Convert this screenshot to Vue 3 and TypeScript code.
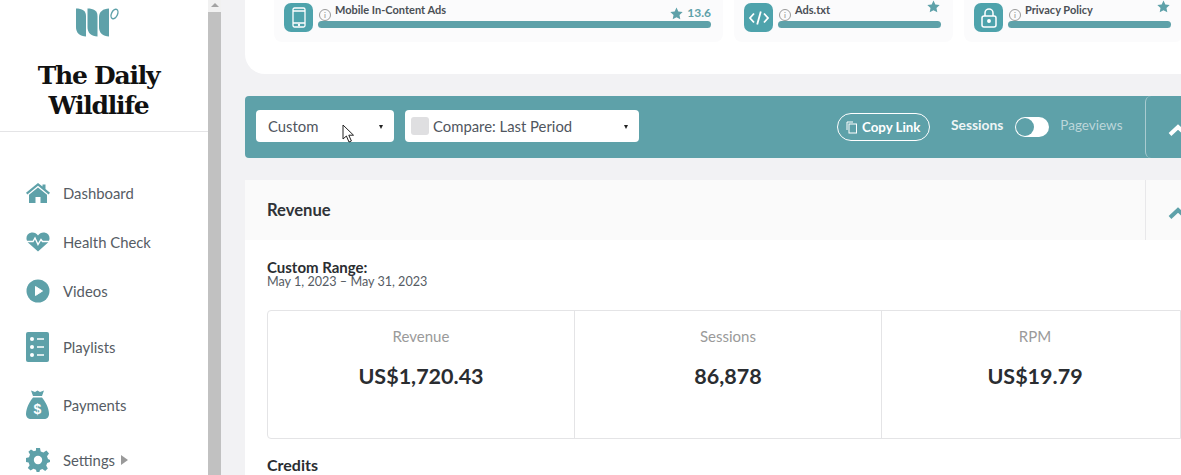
<script setup lang="ts">
const navItems = [
  { label: 'Dashboard', icon: 'home', h: 49, arrow: false },
  { label: 'Health Check', icon: 'heart', h: 49, arrow: false },
  { label: 'Videos', icon: 'play', h: 50, arrow: false },
  { label: 'Playlists', icon: 'list', h: 61, arrow: false },
  { label: 'Payments', icon: 'bag', h: 55, arrow: false },
  { label: 'Settings', icon: 'gear', h: 55, arrow: true }
]

const adCards = [
  { label: 'Mobile In-Content Ads', icon: 'phone', score: '13.6', width: 449 },
  { label: 'Ads.txt', icon: 'code', score: '', width: 219 },
  { label: 'Privacy Policy', icon: 'lock', score: '', width: 219 }
]

const stats = [
  { label: 'Revenue', value: 'US$1,720.43' },
  { label: 'Sessions', value: '86,878' },
  { label: 'RPM', value: 'US$19.79' }
]
</script>

<template>
  <div class="page">
    <aside class="sidebar">
      <div class="brand">
        <svg class="logo" width="44" height="29" viewBox="0 0 44 29">
          <path d="M0 0.5 C6 0.5 10 2.5 10 8 V28.5 C4 28.5 0 25 0 19 Z" fill="#5ea1a9" />
          <path d="M11.5 0.5 C17.5 0.5 21.5 2.5 21.5 8 V28.5 C15.5 28.5 11.5 25 11.5 19 Z" fill="#5ea1a9" />
          <path d="M33 0.5 V28.5 C27 28.5 23 25 23 19 V9 C23 4 27 0.5 33 0.5 Z" fill="#5ea1a9" />
          <ellipse cx="38.5" cy="6" rx="3" ry="5" transform="rotate(25 38.5 6)" fill="none" stroke="#5ea1a9" stroke-width="1.4" />
        </svg>
        <h1 class="brand-name">The Daily<br />Wildlife</h1>
      </div>
      <nav class="nav">
        <a v-for="item in navItems" :key="item.label" class="nav-item" :style="{ height: item.h + 'px' }">
          <span class="nav-icon">
            <svg v-if="item.icon === 'home'" width="24" height="20" viewBox="0 0 24 20">
              <path d="M12 0 L16.5 3.6 V1.5 H19.5 V6 L24 9.8 L22.6 11.4 L12 2.8 L1.4 11.4 L0 9.8 Z" fill="#5ea1a9" />
              <path d="M12 4.6 L21 11.8 V20 H14.5 V14 H9.5 V20 H3 V11.8 Z" fill="#5ea1a9" />
            </svg>
            <svg v-else-if="item.icon === 'heart'" width="24" height="20" viewBox="0 0 24 20">
              <path d="M12 19.5 L2.5 11 C-1 7.5 0 1.5 5.5 0.6 C8.2 0.2 10.5 1.4 12 3.4 C13.5 1.4 15.8 0.2 18.5 0.6 C24 1.5 25 7.5 21.5 11 Z" fill="#5ea1a9" />
              <path d="M0 9.5 H7 L9 6 L12 12.5 L15 7.5 L16.5 9.5 H24" fill="none" stroke="#fff" stroke-width="1.4" />
            </svg>
            <svg v-else-if="item.icon === 'play'" width="24" height="24" viewBox="0 0 24 24">
              <circle cx="12" cy="12" r="11.5" fill="#5ea1a9" />
              <path d="M9.5 7.5 L16.5 12 L9.5 16.5 Z" fill="#fff" stroke="#fff" stroke-linejoin="round" />
            </svg>
            <svg v-else-if="item.icon === 'list'" width="23" height="30" viewBox="0 0 23 30">
              <rect width="23" height="30" rx="2" fill="#5ea1a9" />
              <circle cx="6" cy="7" r="2" fill="#fff" />
              <circle cx="6" cy="15" r="2" fill="#fff" />
              <circle cx="6" cy="23" r="2" fill="#fff" />
              <path d="M11 7 H18 M11 15 H18 M11 23 H18" stroke="#fff" stroke-width="1.6" />
            </svg>
            <svg v-else-if="item.icon === 'bag'" width="23" height="29" viewBox="0 0 23 29">
              <path d="M5 0.5 L9 2 L11.5 0.5 L14 2 L18 0.5 L16 6 H7 Z" fill="#5ea1a9" />
              <path d="M7 7.5 H16 C19 11 23 18 23 24 C23 27 21 29 18 29 H5 C2 29 0 27 0 24 C0 18 4 11 7 7.5 Z" fill="#5ea1a9" />
              <text x="11.5" y="24" text-anchor="middle" class="bag-sign">$</text>
            </svg>
            <svg v-else width="24" height="24" viewBox="0 0 24 24">
              <path d="M10 0 H14 L14.7 3.4 L17.4 4.5 L20.4 2.6 L23 5.4 L21 8.2 L22 11 L24 12 V14 L21.2 15 L20.2 17.6 L21.8 20.4 L19.2 23 L16.4 21 L14 22 L13.4 24 H10.6 L10 21.8 L7.4 20.8 L4.6 22.6 L1.8 20 L3.6 17.2 L2.6 14.6 L0 14 V10 L3 9.2 L4 6.6 L2.4 3.8 L5 1.4 L7.8 3.2 L10 2.4 Z" fill="#5ea1a9" />
              <circle cx="12" cy="12" r="4.2" fill="#fff" />
            </svg>
          </span>
          <span class="nav-label">{{ item.label }}</span>
          <span v-if="item.arrow" class="nav-arrow" />
        </a>
      </nav>
    </aside>

    <div class="scrollbar">
      <span class="scroll-up" />
      <span class="scroll-thumb" />
    </div>

    <main class="content">
      <section class="top-card">
        <div
          v-for="card in adCards"
          :key="card.label"
          class="ad-card"
          :style="{ width: card.width + 'px' }"
        >
          <span class="ad-icon">
            <svg v-if="card.icon === 'phone'" width="14" height="21" viewBox="0 0 14 21" fill="none" stroke="#fff" stroke-width="1.3">
              <rect x="1" y="1" width="12" height="19" rx="1.5" />
              <path d="M1 4 H13 M1 16 H13" />
              <circle cx="7" cy="18" r="0.5" fill="#fff" />
            </svg>
            <svg v-else-if="card.icon === 'code'" width="20" height="14" viewBox="0 0 20 14" fill="none" stroke="#fff" stroke-width="1.8">
              <path d="M5 2.5 L1 7 L5 11.5 M15 2.5 L19 7 L15 11.5 M11.8 0.5 L8.2 13.5" />
            </svg>
            <svg v-else width="16" height="20" viewBox="0 0 16 20" fill="none" stroke="#fff" stroke-width="1.5">
              <rect x="1" y="8" width="14" height="11" rx="2" />
              <path d="M4 8 V5 C4 2.5 6 1 8 1 C10 1 12 2.5 12 5 V8" />
              <circle cx="8" cy="13" r="1.2" fill="#fff" />
            </svg>
          </span>
          <div class="ad-body">
            <div class="ad-head">
              <span class="info">i</span>
              <span class="ad-title">{{ card.label }}</span>
              <span class="ad-score" :class="{ 'ad-score-empty': !card.score }">
                <svg width="13" height="13" viewBox="0 0 24 24"><path d="M12 1 L15.4 8.2 L23.4 9.2 L17.5 14.7 L19 22.6 L12 18.7 L5 22.6 L6.5 14.7 L0.6 9.2 L8.6 8.2 Z" fill="#5ea1a9" /></svg>
                {{ card.score }}
              </span>
            </div>
            <div class="ad-bar" />
          </div>
        </div>
      </section>

      <section class="toolbar">
        <div class="select select-range">
          <span>Custom</span>
          <i class="caret" />
          <svg class="cursor" width="14" height="20" viewBox="0 0 14 20">
            <path d="M1 1 V15 L4.4 12 L7 18 L9.4 17 L6.8 11.2 H11.5 Z" fill="#fff" stroke="#222" stroke-width="1" />
          </svg>
        </div>
        <div class="select select-compare">
          <span class="swatch" />
          <span>Compare: Last Period</span>
          <i class="caret" />
        </div>
        <button type="button" class="copy-link">
          <svg width="12" height="13" viewBox="0 0 12 13" fill="none" stroke="#fff" stroke-width="1">
            <rect x="3" y="3" width="7.5" height="9" />
            <path d="M1 9 V1 H7" />
          </svg>
          Copy Link
        </button>
        <span class="toggle-label">Sessions</span>
        <span class="toggle"><span class="knob" /></span>
        <span class="toggle-label toggle-off">Pageviews</span>
        <span class="collapse collapse-light">
          <svg width="20" height="14" viewBox="0 0 20 14"><path d="M2 11.5 L10 4 L18 11.5" fill="none" stroke="#fff" stroke-width="4" /></svg>
        </span>
      </section>

      <section class="revenue">
        <header class="revenue-head">
          <h2>Revenue</h2>
          <span class="collapse">
            <svg width="20" height="14" viewBox="0 0 20 14"><path d="M2 11.5 L10 4 L18 11.5" fill="none" stroke="#5ea1a9" stroke-width="4" /></svg>
          </span>
        </header>
        <div class="revenue-body">
          <div class="range-title">Custom Range:</div>
          <div class="range-dates">May 1, 2023 – May 31, 2023</div>
          <div class="stats">
            <div v-for="stat in stats" :key="stat.label" class="stat">
              <div class="stat-label">{{ stat.label }}</div>
              <div class="stat-value">{{ stat.value }}</div>
            </div>
          </div>
          <h3 class="credits">Credits</h3>
        </div>
      </section>
    </main>
  </div>
</template>

<style>
html,
body {
  margin: 0;
  overflow: hidden;
  background: #f2f2f4;
}
</style>

<style scoped>
.page {
  display: flex;
  width: 1181px;
  height: 475px;
  overflow: hidden;
  font-family: "Lato", "Open Sans", "Liberation Sans", sans-serif;
  color: #4a4f55;
}

.sidebar {
  flex: 0 0 208px;
  background: #fff;
}

.brand {
  height: 132px;
  box-sizing: border-box;
  border-bottom: 1px solid #e4e4e6;
  padding: 8px 11px 0 0;
  text-align: center;
}

.logo {
  display: block;
  margin-left: 76px;
}

.brand-name {
  margin: 24px 0 0;
  font-family: "DejaVu Serif", "Liberation Serif", serif;
  font-size: 25px;
  line-height: 30px;
  font-weight: 700;
  color: #111;
  letter-spacing: -1.25px;
}

.nav {
  display: flex;
  flex-direction: column;
  padding-top: 36px;
}

.nav-item {
  display: flex;
  align-items: center;
  padding-left: 26px;
}

.nav-icon {
  display: flex;
  flex: 0 0 37px;
}

.nav-label {
  font-size: 14.85px;
  color: #565c64;
}

.nav-arrow {
  margin-left: 6px;
  border-left: 7px solid #9a9a9a;
  border-top: 5px solid transparent;
  border-bottom: 5px solid transparent;
}

.bag-sign {
  font-size: 14px;
  font-weight: 700;
  fill: #fff;
  font-family: "Liberation Sans", sans-serif;
}

.scrollbar {
  flex: 0 0 13px;
  background: #f1f1f1;
  display: flex;
  flex-direction: column;
  align-items: center;
}

.scroll-up {
  margin-top: 3px;
  height: 0;
  border-left: 4px solid transparent;
  border-right: 4px solid transparent;
  border-bottom: 4px solid #a3a3a3;
}

.scroll-thumb {
  width: 100%;
  flex: 1;
  margin-top: 5px;
  background: #c1c1c1;
}

.content {
  flex: 1;
  min-width: 0;
  padding: 0 0 0 24px;
  background: #f2f2f4;
}

.top-card {
  display: flex;
  gap: 11px;
  height: 74px;
  box-sizing: border-box;
  margin-right: -40px;
  padding-left: 29px;
  background: #fff;
  border-radius: 0 0 0 20px;
}

.ad-card {
  display: flex;
  gap: 5px;
  flex: none;
  height: 42px;
  box-sizing: border-box;
  padding: 3px 12px 0 10px;
  background: #fbfbfc;
  border-radius: 0 0 8px 8px;
}

.ad-icon {
  flex: 0 0 29px;
  height: 29px;
  display: flex;
  align-items: center;
  justify-content: center;
  background: #4ea3ac;
  border-radius: 7px;
}

.ad-body {
  flex: 1;
  min-width: 0;
}

.ad-head {
  display: flex;
  align-items: flex-start;
  height: 18px;
}

.info {
  width: 10px;
  height: 10px;
  margin: 6px 4px 0 1px;
  border: 1px solid #9a9a9a;
  border-radius: 50%;
  font-size: 8px;
  line-height: 10px;
  text-align: center;
  color: #8a8a8a;
}

.ad-title {
  font-size: 11px;
  line-height: 14px;
  font-weight: 700;
  color: #4a4f55;
}

.ad-score {
  display: flex;
  align-items: center;
  gap: 4px;
  margin-left: auto;
  margin-top: 3px;
  font-size: 12px;
  line-height: 14px;
  font-weight: 700;
  color: #5ea1a9;
}

.ad-score-empty {
  margin-top: -3px;
  margin-right: 1px;
}

.ad-bar {
  height: 7px;
  border-radius: 4px;
  background: #5ea1a9;
}

.toolbar {
  display: flex;
  align-items: center;
  height: 62px;
  margin-top: 22px;
  padding-left: 11px;
  background: #5ea1a9;
  border-radius: 4px 0 0 4px;
}

.select {
  position: relative;
  display: flex;
  align-items: center;
  height: 32px;
  margin-bottom: 2px;
  box-sizing: border-box;
  background: #fff;
  border-radius: 4px;
  font-size: 14.85px;
  color: #505660;
}

.select-range {
  width: 138px;
  padding-left: 12px;
}

.select-compare {
  width: 234px;
  margin-left: 11px;
  padding-left: 6px;
  gap: 4px;
}

.swatch {
  width: 18px;
  height: 18px;
  border-radius: 3px;
  background: #dfdfe1;
}

.caret {
  position: absolute;
  right: 11px;
  top: 15px;
  border-left: 2.5px solid transparent;
  border-right: 2.5px solid transparent;
  border-top: 4px solid #222;
}

.cursor {
  position: absolute;
  left: 86px;
  top: 14px;
}

.copy-link {
  display: flex;
  align-items: center;
  gap: 4px;
  width: 93px;
  height: 28px;
  margin-left: 198px;
  padding: 0 0 0 8px;
  background: transparent;
  border: 1px solid #fff;
  border-radius: 14px;
  font-family: inherit;
  font-size: 13.3px;
  font-weight: 700;
  color: #fff;
  white-space: nowrap;
}

.toggle-label {
  margin-left: 21px;
  margin-top: -5px;
  font-size: 13.8px;
  font-weight: 700;
  color: #eef5f6;
}

.toggle-off {
  margin-left: 11px;
  font-size: 13.5px;
  font-weight: 400;
  color: #bcd6da;
}

.toggle {
  display: block;
  width: 34px;
  height: 20px;
  margin-left: 12px;
  background: #fff;
  border-radius: 10px;
  position: relative;
}

.knob {
  position: absolute;
  left: 1px;
  top: 1px;
  width: 18px;
  height: 18px;
  border-radius: 50%;
  background: #5ea1a9;
}

.collapse {
  display: flex;
  align-items: center;
  justify-content: flex-start;
  width: 36px;
  height: 100%;
  margin-left: auto;
  box-sizing: border-box;
  padding: 6px 0 0 22px;
  border-left: 1px solid #e8e8ea;
  flex: none;
}

.collapse svg {
  flex: none;
}

.collapse-light {
  border-left-color: #a9cbd0;
  border-radius: 6px 0 0 6px;
}

.revenue {
  margin-top: 22px;
  background: #fff;
  height: 295px;
}

.revenue-head {
  display: flex;
  align-items: center;
  height: 60px;
  padding-left: 22px;
  background: #fafafa;
}

.revenue-head h2 {
  margin: 0;
  font-size: 16.6px;
  font-weight: 700;
  color: #2f3338;
}

.revenue-body {
  padding: 20px 0 0 22px;
}

.range-title {
  font-size: 15px;
  line-height: 14px;
  font-weight: 700;
  color: #2a2d31;
}

.range-dates {
  font-size: 12.6px;
  line-height: 16px;
  color: #565c64;
}

.stats {
  display: grid;
  grid-template-columns: 306px 307px 307px;
  height: 129px;
  margin-top: 20px;
  border: 1px solid #e4e4e6;
  border-radius: 4px 0 0 4px;
  box-sizing: border-box;
}

.stat {
  text-align: center;
  padding-top: 16px;
  border-left: 1px solid #e4e4e6;
}

.stat:first-child {
  border-left: 0;
}

.stat-label {
  font-size: 15px;
  color: #9a9a9a;
}

.stat-value {
  margin-top: 18px;
  font-size: 21.5px;
  font-weight: 700;
  color: #2a2d31;
}

.credits {
  margin: 16px 0 0;
  font-size: 16px;
  font-weight: 700;
  color: #2a2d31;
}
</style>
